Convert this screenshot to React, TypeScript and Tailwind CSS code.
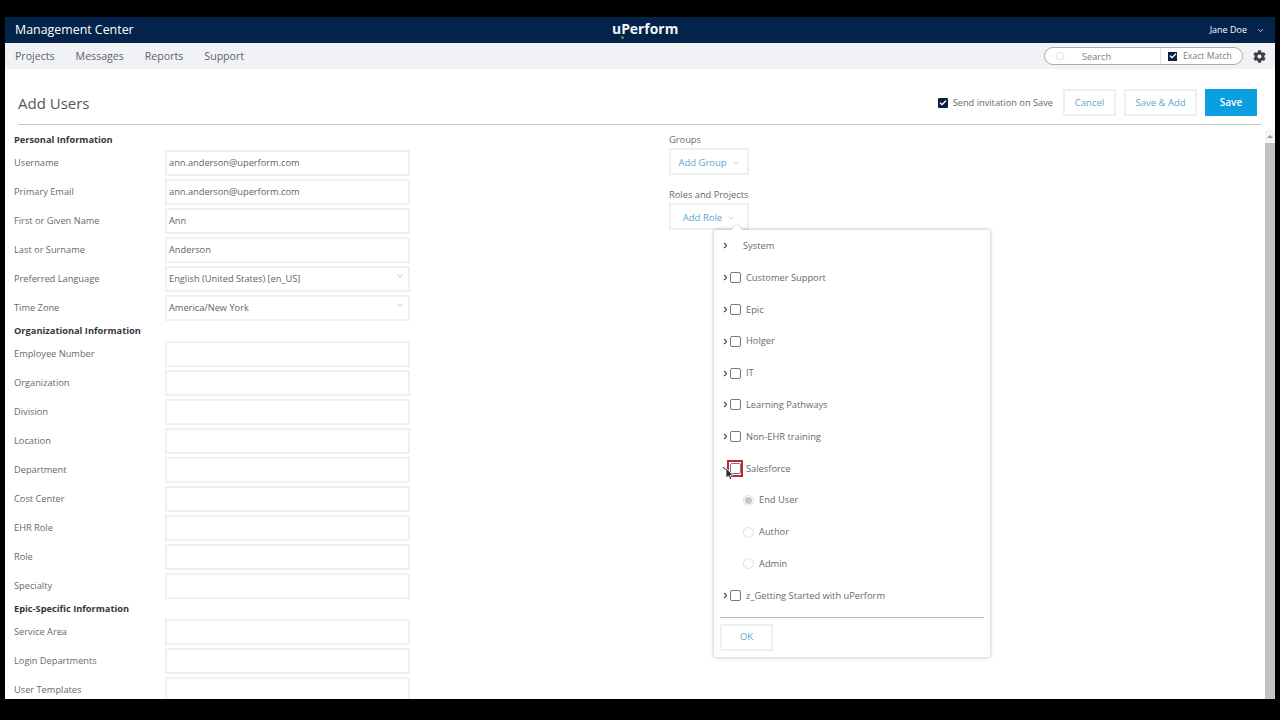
import { ChevronDown, ChevronRight, Check, Search } from "lucide-react";
import { FaCog } from "react-icons/fa";

const personal = [
  { label: "Username", value: "ann.anderson@uperform.com" },
  { label: "Primary Email", value: "ann.anderson@uperform.com" },
  { label: "First or Given Name", value: "Ann" },
  { label: "Last or Surname", value: "Anderson" },
  { label: "Preferred Language", value: "English (United States) [en_US]", select: true },
  { label: "Time Zone", value: "America/New York", select: true },
];
const organization = ["Employee Number", "Organization", "Division", "Location", "Department", "Cost Center", "EHR Role", "Role", "Specialty"];
const epic = ["Service Area", "Login Departments", "User Templates"];

const Field = ({ label, value, select }: { label: string; value?: string; select?: boolean }) => (
  <div className="flex h-[29px] shrink-0 items-center">
    <div className="w-[151px] text-[9.25px] text-[#666a70]">{label}</div>
    <div className="relative flex h-[26px] w-[245px] items-center border-2 border-[#f0f0f1] px-[2px] text-[9.25px] text-[#5f6368]">
      {value}
      {select && <ChevronDown className="absolute right-[3px] top-[3px] h-[10px] w-[10px] text-[#b4b7bb]" />}
    </div>
  </div>
);

const Heading = ({ children }: { children: string }) => (
  <div className="flex h-[17px] shrink-0 items-center pt-[1px] text-[9.25px] font-bold text-[#33373d]">{children}</div>
);

const Box = ({ red }: { red?: boolean }) => (
  <div className={red ? "flex h-[17px] w-[16px] items-center justify-center border-2 border-[#c2252f]" : "flex h-[17px] w-[16px] items-center justify-center"}>
    <div className="h-[11px] w-[11px] rounded-[2px] border border-[#77797d] bg-white" />
  </div>
);

const TreeRow = ({ label, box = true }: { label: string; box?: boolean }) => (
  <div className="flex h-[31.8px] items-center">
    <ChevronRight className="ml-[7px] h-[9px] w-[9px] shrink-0 text-[#4a4d52]" strokeWidth={3} />
    {box ? <div className="ml-[-3px] mr-[3px]"><Box /></div> : <div className="w-[13px]" />}
    <span className="text-[9.3px] text-[#666a70]">{label}</span>
  </div>
);

const RadioRow = ({ label, on }: { label: string; on?: boolean }) => (
  <div className="flex h-[31.8px] items-center pl-[29px]">
    <div className="flex h-[11px] w-[11px] items-center justify-center rounded-full border border-[#dcdde0] bg-white">
      {on && <div className="h-[7px] w-[7px] rounded-full bg-[#c4c6c9]" />}
    </div>
    <span className="ml-[5px] text-[9.3px] text-[#666a70]">{label}</span>
  </div>
);

const Btn = ({ children, className }: { children: string; className: string }) => (
  <button className={`h-[27px] border-2 border-[#eeeff1] pt-[1px] text-[9.5px] text-[#5ba6cf] ${className}`}>{children}</button>
);

export default function App() {
  return (
    <div className="h-screen overflow-hidden bg-black pl-[5px] pr-[5px] pt-[17px] pb-[21px]" style={{ fontFamily: '"Open Sans", sans-serif' }}>
      <div className="relative flex h-full flex-col overflow-hidden bg-white">
        {/* Header */}
        <div className="relative flex h-[26px] shrink-0 items-center justify-between bg-[#04234a] pl-[10px] pr-[10px] text-white">
          <span className="text-[12.4px]">Management Center</span>
          <div className="absolute left-[607px] top-[2px] text-[13.9px] font-bold leading-[20px] text-[#f2f4f7]">
            uPerform
            <span className="absolute left-[9px] top-[17px] h-[3px] w-[3px] rounded-full bg-[#2fa36b]" />
          </div>
          <div className="flex items-center gap-[9px] text-[9px]">
            Jane Doe
            <ChevronDown className="h-[9px] w-[9px]" />
          </div>
        </div>

        {/* Nav */}
        <div className="flex h-[26px] shrink-0 items-center bg-[#f1f2f5] pl-[10px] pr-[9px]">
          <div className="flex gap-[21px] pt-[1px] text-[10.6px] text-[#5f6368]">
            <span>Projects</span>
            <span>Messages</span>
            <span>Reports</span>
            <span>Support</span>
          </div>
          <div className="ml-auto flex h-[18px] w-[199px] items-center rounded-full border border-[#a9abb0] bg-white text-[9px] text-[#7d8085]">
            <Search className="ml-[10px] h-[11px] w-[11px] text-[#dcdde0]" />
            <span className="ml-[16px] w-[79px] border-r border-[#e2e3e6] pt-[1px] text-[9.2px] leading-[15px]">Search</span>
            <div className="ml-[7px] flex h-[9px] w-[9px] items-center justify-center bg-[#0d1f3f]">
              <Check className="h-[8px] w-[8px] text-white" strokeWidth={4} />
            </div>
            <span className="ml-[6px] pt-[2px] text-[8.7px]">Exact Match</span>
          </div>
          <FaCog className="ml-[10px] h-[13px] w-[13px] text-[#3c3f44]" />
        </div>

        {/* Title bar */}
        <div className="ml-[13px] mr-[14px] flex h-[56px] shrink-0 items-center justify-between border-b border-[#c6c7ca] pr-[4px] pt-[12px]">
          <h1 className="mt-[2px] text-[15px] font-normal text-[#54575c]">Add Users</h1>
          <div className="flex items-center">
            <div className="flex h-[10px] w-[10px] items-center justify-center rounded-[1px] bg-[#0d1f3f]">
              <Check className="h-[8px] w-[8px] text-white" strokeWidth={4} />
            </div>
            <span className="ml-[5px] pt-[1px] text-[9.25px] text-[#666a70]">Send invitation on Save</span>
            <Btn className="ml-[10px] w-[53px]">Cancel</Btn>
            <Btn className="ml-[8px] w-[73px]">Save &amp; Add</Btn>
            <button className="ml-[8px] h-[27px] w-[52px] bg-[#0b9fe0] text-[10px] font-semibold text-white">Save</button>
          </div>
        </div>

        {/* Body */}
        <div className="relative flex min-h-0 flex-1">
          <div className="flex flex-1 overflow-hidden pl-[9px] pt-[6px]">
            <div className="w-[655px] shrink-0">
              <Heading>Personal Information</Heading>
              {personal.map((f) => <Field key={f.label} {...f} />)}
              <Heading>Organizational Information</Heading>
              {organization.map((l) => <Field key={l} label={l} />)}
              <Heading>Epic-Specific Information</Heading>
              {epic.map((l) => <Field key={l} label={l} />)}
            </div>
            <div className="relative pt-[1px]">
              <div className="flex h-[16px] items-center text-[9.3px] text-[#666a70]">Groups</div>
              <button className="flex h-[27px] w-[80px] items-center justify-center gap-[5px] border-2 border-[#eeeff1] pt-[3px] text-[9.5px] text-[#5ba6cf]">
                Add Group
                <ChevronDown className="h-[8px] w-[8px] text-[#b4b7bb]" />
              </button>
              <div className="mt-[12px] flex h-[16px] items-center text-[9.3px] text-[#666a70]">Roles and Projects</div>
              <button className="flex h-[27px] w-[80px] items-center justify-center gap-[5px] border-2 border-[#eeeff1] pt-[3px] text-[9.5px] text-[#5ba6cf]">
                Add Role
                <ChevronDown className="h-[8px] w-[8px] text-[#b4b7bb]" />
              </button>
            </div>
          </div>
          {/* Scrollbar */}
          <div className="mt-[5px] flex w-[10px] shrink-0 flex-col bg-[#f6f6f7]">
            <div className="flex h-[13px] items-center justify-center">
              <div className="h-0 w-0 border-x-[3px] border-b-[3px] border-x-transparent border-b-[#9a9ca0]" />
            </div>
            <div className="flex-1 bg-[#c2c3c6]" />
          </div>

          {/* Add Role popup */}
          <div className="absolute left-[709px] top-[105px] h-[427px] w-[276px] rounded-[2px] bg-white shadow-[0_0_4px_rgba(0,0,0,0.3)]">
            <div className="absolute -top-[4px] left-[19px] h-[8px] w-[8px] rotate-45 bg-white shadow-[-1px_-1px_1px_rgba(0,0,0,0.12)]" />
            <div className="relative">
              <TreeRow label="System" box={false} />
              <TreeRow label="Customer Support" />
              <TreeRow label="Epic" />
              <TreeRow label="Holger" />
              <TreeRow label="IT" />
              <TreeRow label="Learning Pathways" />
              <TreeRow label="Non-EHR training" />
              <div className="flex h-[31.8px] items-center">
                <ChevronDown className="ml-[7px] h-[9px] w-[9px] shrink-0 text-[#4a4d52]" strokeWidth={3} />
                <div className="ml-[-3px] mr-[3px]"><Box red /></div>
                <span className="text-[9.3px] text-[#666a70]">Salesforce</span>
              </div>
              <RadioRow label="End User" on />
              <RadioRow label="Author" />
              <RadioRow label="Admin" />
              <TreeRow label="z_Getting Started with uPerform" />
            </div>
            <div className="mx-[6px] mt-[5px] border-t border-[#b9babd]" />
            <Btn className="ml-[6px] mt-[6px] w-[53px]">OK</Btn>
            {/* Mouse cursor */}
            <svg className="absolute left-[11px] top-[237px]" width="9" height="14" viewBox="0 0 9 14">
              <path d="M1 1 L1 11 L3.4 8.9 L5 12.6 L6.8 11.8 L5.2 8.3 L8 8 Z" fill="#2b2d31" stroke="#fff" strokeWidth="0.8" />
            </svg>
          </div>
        </div>
      </div>
    </div>
  );
}
